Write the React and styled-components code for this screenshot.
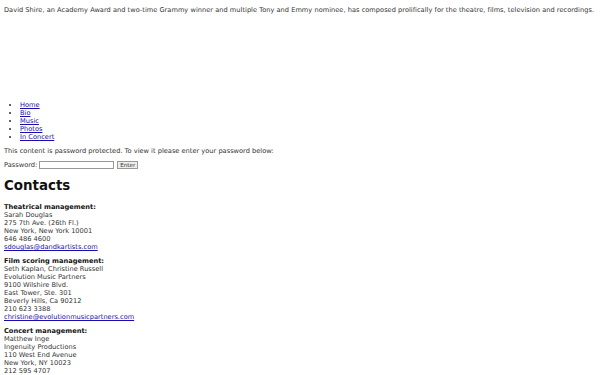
import React from "react";
import styled, { createGlobalStyle } from "styled-components";

const GlobalStyle = createGlobalStyle`
	body {
		margin: 0;
		padding: 0 4px;
		background: #fff;
		color: #333;
		font-family: "DejaVu Sans", sans-serif;
		font-size: 6.65px;
		line-height: 8px;
	}
	a {
		color: #1a0dab;
	}
`;

const Header = styled.div`
	height: 101px;
	padding-top: 6px;
	box-sizing: border-box;
`;

const Intro = styled.p`
	margin: 0;
	font-size: 6.6px;
	letter-spacing: 0.04px;
	white-space: nowrap;
`;

const Nav = styled.ul`
	margin: 0 0 6px;
	padding-left: 16px;
	list-style: disc;
`;

const Text = styled.p`
	margin: 0 0 6px;
`;

const PasswordForm = styled.form`
	display: flex;
	align-items: center;
	gap: 2px;
	margin: 0 0 8px;

	input {
		width: 75px;
		height: 8px;
		box-sizing: border-box;
		border: 1px solid #999;
		padding: 0;
	}

	button {
		height: 8px;
		padding: 0 2px;
		margin-left: 1px;
		font: inherit;
		font-size: 5.6px;
		line-height: 6px;
		border: 1px solid #999;
		background: #eee;
		color: #333;
	}
`;

const Title = styled.h2`
	margin: 0 0 8px;
	font-size: 13.4px;
	line-height: 18px;
	color: #111;
`;

const Contact = styled.div`
	margin-bottom: 6px;

	strong {
		display: block;
		color: #111;
	}
`;

const contacts = [
	{
		title: "Theatrical management:",
		lines: ["Sarah Douglas", "275 7th Ave. (26th Fl.)", "New York, New York 10001", "646 486 4600"],
		email: "sdouglas@dandkartists.com",
	},
	{
		title: "Film scoring management:",
		lines: ["Seth Kaplan, Christine Russell", "Evolution Music Partners", "9100 Wilshire Blvd.", "East Tower, Ste. 301", "Beverly Hills, Ca 90212", "210 623 3388"],
		email: "christine@evolutionmusicpartners.com",
	},
	{
		title: "Concert management:",
		lines: ["Matthew Inge", "Ingenuity Productions", "110 West End Avenue", "New York, NY 10023", "212 595 4707"],
	},
];

export default function App() {
	return (
		<>
			<GlobalStyle />
			<Header>
				<Intro>
					David Shire, an Academy Award and two-time Grammy winner and multiple Tony and Emmy nominee, has composed prolifically for the theatre, films, television and recordings.
				</Intro>
			</Header>
			<Nav>
				<li><a href="#home">Home</a></li>
				<li><a href="#bio">Bio</a></li>
				<li><a href="#music">Music</a></li>
				<li><a href="#photos">Photos</a></li>
				<li><a href="#concert">In Concert</a></li>
			</Nav>
			<Text>This content is password protected. To view it please enter your password below:</Text>
			<PasswordForm onSubmit={(e) => e.preventDefault()}>
				<label htmlFor="pwd">Password:</label>
				<input id="pwd" type="password" />
				<button type="submit">Enter</button>
			</PasswordForm>
			<Title>Contacts</Title>
			{contacts.map((c) => (
				<Contact key={c.title}>
					<strong>{c.title}</strong>
					{c.lines.map((l) => (
						<div key={l}>{l}</div>
					))}
					{c.email && <a href={`mailto:${c.email}`}>{c.email}</a>}
				</Contact>
			))}
		</>
	);
}
